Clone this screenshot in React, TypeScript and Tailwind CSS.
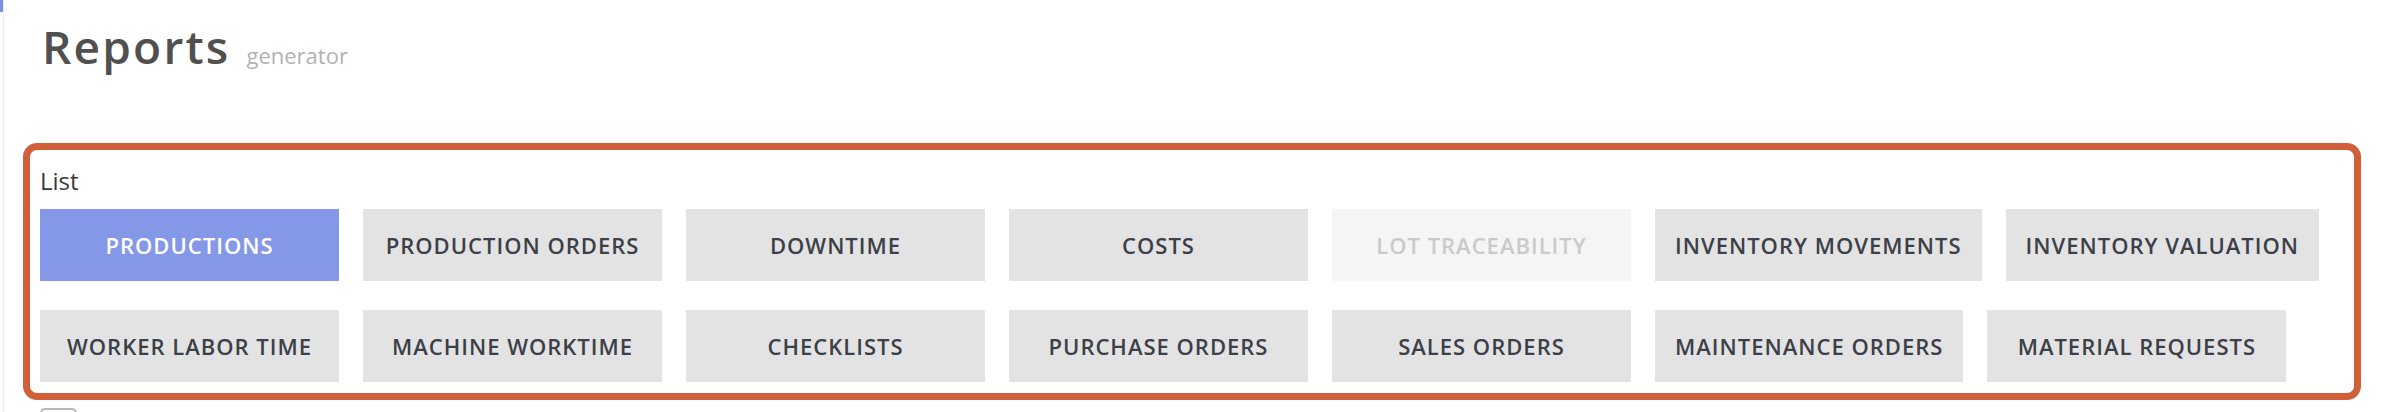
import React from "react";

const row = [
  { label: "PRODUCTIONS", state: "active" },
  { label: "PRODUCTION ORDERS" },
  { label: "DOWNTIME" },
  { label: "COSTS" },
  { label: "LOT TRACEABILITY", state: "disabled" },
  { label: "INVENTORY MOVEMENTS" },
  { label: "INVENTORY VALUATION" },
  { label: "WORKER LABOR TIME" },
  { label: "MACHINE WORKTIME" },
  { label: "CHECKLISTS" },
  { label: "PURCHASE ORDERS" },
  { label: "SALES ORDERS" },
  { label: "MAINTENANCE ORDERS" },
  { label: "MATERIAL REQUESTS" },
];

function Btn({ label, state }: { label: string; state?: string }) {
  const base =
    "h-[72px] min-w-[299px] px-[20px] flex items-center justify-center text-[22px] font-semibold tracking-[1px] whitespace-nowrap";
  if (state === "active")
    return <div className={`${base} bg-[#8598e8] text-white`}>{label}</div>;
  if (state === "disabled")
    return <div className={`${base} bg-[#f5f5f5] text-[#cacaca]`}>{label}</div>;
  return <div className={`${base} bg-[#e3e3e3] text-[#3c4049]`}>{label}</div>;
}

export default function App() {
  return (
    <div
      className="relative w-[2400px] h-[412px] bg-white overflow-hidden"
      style={{ fontFamily: '"Open Sans", "Noto Sans", sans-serif' }}
    >
      <div className="absolute left-0 top-0 w-[3px] h-[12px] bg-[#7d90e4]" />
      <div className="absolute left-[3px] top-0 w-[1px] h-[412px] bg-[#ececec]" />
      <div className="pl-[23px] pr-[39px]">
        <div className="flex items-baseline pt-[14px] pl-[19px] h-[143px]">
          <span className="text-[46px] font-semibold text-[#505050] tracking-[2.2px] leading-[64px]">
            Reports
          </span>
          <span className="ml-[16px] text-[22px] text-[#b2b2b2]">generator</span>
        </div>
        <div className="border-[7px] border-[#cf603a] rounded-[14px] h-[257px] px-[10px] pt-[14px]">
          <div className="text-[24px] text-[#3a3a3a] leading-[34px] mb-[11px]">List</div>
          <div className="flex flex-wrap gap-x-[24px] gap-y-[29px]">
            {row.map((b) => (
              <Btn key={b.label} label={b.label} state={b.state} />
            ))}
          </div>
        </div>
        <div className="ml-[17px] mt-[8px] w-[37px] h-[30px] border-2 border-[#b8b8b8] rounded-[5px]" />
      </div>
    </div>
  );
}
